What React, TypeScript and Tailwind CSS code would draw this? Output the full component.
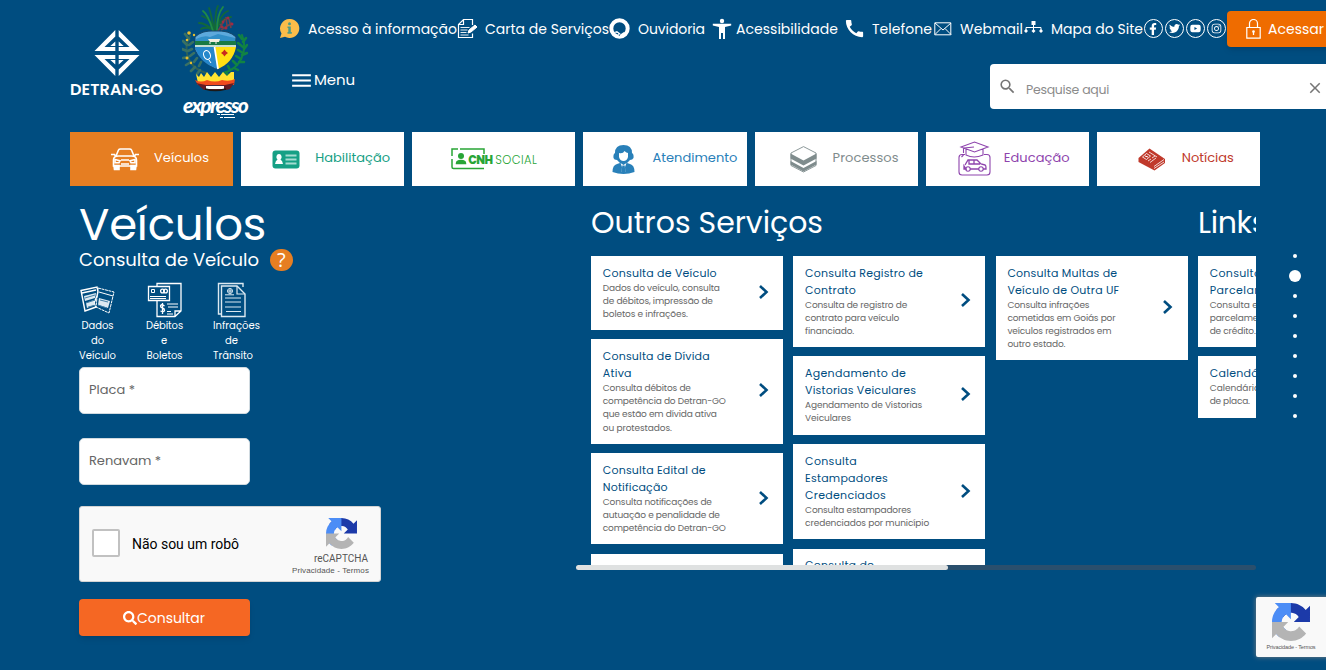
import { useLayoutEffect, useRef, useState, type ReactNode } from "react";
import { FaFacebookF, FaInstagram, FaSearch, FaTwitter, FaYoutube } from "react-icons/fa";
import { MdCall, MdClose, MdMenu, MdSearch } from "react-icons/md";

/** One line of text whose letter spacing is adjusted to fill the given width. */
function Fit({ w, className = "", children }: { w: number; className?: string; children: string }) {
  const ref = useRef<HTMLSpanElement>(null);
  const [spacing, setSpacing] = useState(0);
  useLayoutEffect(() => {
    const el = ref.current;
    if (el) setSpacing((w - el.getBoundingClientRect().width) / children.length);
  }, [w, children]);
  return (
    <span className={`block ${className}`} style={{ width: w }}>
      <span ref={ref} className="inline-block whitespace-nowrap" style={{ letterSpacing: `${spacing}px` }}>
        {children}
      </span>
    </span>
  );
}

function DetranLogo() {
  return (
    <div className="mt-[29px] flex w-[93px] flex-col items-center text-white">
      <svg width="46" height="48" viewBox="0 0 46 48" fill="currentColor">
        <path d="M21.300 1v6.500L10.500 18h10.800v4H0.500zM21.300 12.500V17h-5z" />
        <path d="M24.700 1v6.500L35.500 18H24.700v4h20.800zM24.700 12.500V17h5z" />
        <path d="M21.300 47v-6.500L10.500 30h10.800v-4H0.500zM21.300 35.500V31h-5z" />
        <path d="M24.700 47v-6.500L35.500 30H24.700v-4h20.800zM24.700 35.500V31h5z" />
      </svg>
      <Fit w={93} className="mt-[2px] text-[16px] leading-[21px] font-semibold">DETRAN·GO</Fit>
    </div>
  );
}

function Crest() {
  return (
    <div className="mt-[4px] ml-[19px] w-[66px] text-white">
      <svg width="66" height="90" viewBox="0 0 66 90" fill="none">
        <g stroke="#12683a" strokeWidth="1.800" strokeLinecap="round">
          <path d="M33 28C31 20 27 14 20 12M33 28C30 17 29 9 27 4M33 28C33 17 33 7 36 2M33 28C36 18 40 9 46 7M33 28C26 21 21 19 17 19M33 28C29 23 22 23 19 25M34 26C38 17 43 13 49 13" />
          <path d="M31 27C28 17 24 9 21 7M35 26C35 15 37 8 41 3" stroke="#1f8a45" />
        </g>
        <g stroke="#2d6158" strokeWidth="2" strokeLinecap="round">
          <path d="M8 32C1 45 4 63 24 69" />
          <path d="M7 35l-4-5M5 41l-4-4M5 47l-5-2M6 53l-5 1M9 58l-5 3M13 63l-4 4M18 66l-3 4M7 41l4-3M6 47l4-2M8 52l4-3M12 58l3-4M17 62l2-4" stroke="#397063" strokeWidth="2.600" />
        </g>
        <g stroke="#118343" strokeLinecap="round">
          <path d="M60 31C66 46 59 65 41 69" strokeWidth="2" />
          <path d="M60 35l-3-4M61 38l3-4M61 43l-5-4M62 45l3-4M61 49l-5-3M60 51l5-2M59 55l-5-3M57 58l5 0M55 61l-4-4M52 64l4 2M48 66l-2-4M44 68l2 3" strokeWidth="2.500" />
        </g>
        <g fill="#e7bd2e">
          <circle cx="7" cy="29" r="1.800" /><circle cx="12" cy="31" r="1.200" /><circle cx="5" cy="36" r="1.300" /><circle cx="5" cy="54" r="1.500" /><circle cx="9" cy="59" r="1.200" />
        </g>
        <path d="M36 27l7-12M39 26l11-7M38 20l5 5M44 13l1 9M47 15l2 9" stroke="#6f4149" strokeWidth="1.600" />
        <g fill="#a12b45"><circle cx="41" cy="18" r="1.400" /><circle cx="46" cy="14" r="1.500" /><circle cx="50" cy="20" r="1.500" /><circle cx="44" cy="24" r="1.500" /><circle cx="40" cy="23" r="1.200" /></g>
        <path d="M13 33Q20 26 33 27Q47 26 54 33L53 44Q47 59 34 65Q19 58 13 46z" fill="#5da9dc" stroke="#16476c" />
        <path d="M14 35q8-4 14-2l8-3 17 4v4H14z" fill="#318fc8" />
        <path d="M13 37h41v6H13z" fill="#187a45" /><path d="M26 35h12l-1 3h-9z" fill="#f1eee0" /><path d="M28 38v2m6-2v2" stroke="#eee" />
        <path d="M13 43h20l3 22C23 61 15 52 13 43z" fill="#2587cb" />
        <path d="M33 43h21C52 54 45 61 36 65z" fill="#ffdf12" />
        <path d="M13 42h41M32.500 43l3.500 22" stroke="#fff" strokeWidth="1.700" />
        <ellipse cx="25" cy="51" rx="3.300" ry="4.500" transform="rotate(-20 25 51)" stroke="#fff" strokeWidth="1.100" /><path d="M27 56l2 3" stroke="#fff" />
        <path d="M42.500 45.500l1.500 2 2 1.500-2 1.500-1.500 2-1.500-2-2-1.500 2-1.500z" fill="#c82820" />
        <path d="M14 70l3 3 2-4 3 4 3-5 4 5 4-5 4 5 4-5 4 4 4-4 3 0v8l-2 3H16z" fill="#ffe332" />
        <path d="M13 76q6 3 12 0 8 3 15 0 7 2 13-1l-1 6H16z" fill="#ef4b1e" />
        <path d="M14 79q20 5 38 0l-4 6-4 1H22z" fill="#651c24" />
        <path d="M24 82h18v3H24z" fill="#fff" /><path d="M23 85q10 3 21 0" stroke="#1b1918" strokeWidth="1.500" />
      </svg>
      <div className="relative h-[28px] pl-px">
        <Fit w={64} className="font-['Lato'] text-[21px] leading-[22px] font-black italic">expresso</Fit>
        <svg className="absolute top-[18px] left-[35px]" width="20" height="8" viewBox="0 0 20 8" stroke="currentColor"><path d="M0 2.500h3m1 0h13M3 5.500h3m1 0h11" /></svg>
      </div>
    </div>
  );
}

const navIcons = {
  info: (
    <svg className="-mt-px" width="21" height="21" viewBox="0 0 21 21"><path d="M11 1a9.500 9.500 0 1 1-5 17.700L1 20l1.500-4.500A9.500 9.500 0 0 1 11 1z" fill="#fbbd4a" /><circle cx="10.500" cy="5.800" r="1.500" fill="#4e9b86" /><path d="M8.500 8.500h3.300v5.600h1v1.700H8.500v-1.700h.8v-4h-.8z" fill="#4e9b86" /></svg>
  ),
  letter: (
    <svg className="-mt-px" width="21" height="21" viewBox="0 0 21 21" fill="none" stroke="#fff"><path d="M15.500 7V1.500H6.500L1.500 6.500v13h14v-4M6.500 1.500v5h-5" strokeWidth="1.200" /><path d="M3.500 9.500h9M3.500 12h7M3.500 14.500h6M3.500 17h8" strokeWidth=".9" /><path d="M11 15l1-3 6-5 2 2-6 5z" fill="#fff" /></svg>
  ),
  ear: (
    <svg className="-mt-px" width="21" height="21" viewBox="0 0 21 21"><circle cx="10.500" cy="10.500" r="8.200" fill="none" stroke="#fff" strokeWidth="4" /><path d="M4 14.500l5 .5 1 4 3-1 3-3-1-1-3 2-4-3z" fill="#fff" /><path d="M10 18l1.500-2.500" stroke="#004d80" strokeWidth=".8" /></svg>
  ),
  person: (
    <svg className="-mt-px ml-[7px]" width="20" height="22" viewBox="0 0 20 22" fill="#fff"><circle cx="10" cy="3" r="2.200" /><path d="M.8 5.800h18.400v1.800L13 9v12h-2v-6H9v6H7V9L.8 7.600z" /></svg>
  ),
  phone: <MdCall className="-mt-px ml-[5px] text-[23px]" />,
  mail: (
    <svg className="-mt-px ml-[2px]" width="18" height="14" viewBox="0 0 18 14" fill="none" stroke="#fff"><path d="M.8.800h16v12H.8zM1 1l8 7 8-7M1 12.500l6-6M17 12.500l-6-6" /></svg>
  ),
  map: (
    <svg className="-mt-[5px] ml-[1px]" width="19" height="14" viewBox="0 0 19 14" fill="#fff"><path d="M7.500 1h4v4h-4z" /><path d="M9.500 4v7M2 11V7.500h15V11" fill="none" stroke="#fff" /><path d="M2 9l2 2-2 2-2-2zM9.500 9l2 2-2 2-2-2zM17 9l2 2-2 2-2-2z" /></svg>
  ),
};

const links: { icon: ReactNode; box: string; label: string; w: number }[] = [
  { icon: navIcons.info, box: "w-[29px]", label: "Acesso à informação", w: 149 },
  { icon: navIcons.letter, box: "w-[28px]", label: "Carta de Serviços", w: 124 },
  { icon: navIcons.ear, box: "w-[29px]", label: "Ouvidoria", w: 67 },
  { icon: navIcons.person, box: "w-[31px]", label: "Acessibilidade", w: 102 },
  { icon: navIcons.phone, box: "w-[34px]", label: "Telefone", w: 60 },
  { icon: navIcons.mail, box: "w-[28px]", label: "Webmail", w: 63 },
  { icon: navIcons.map, box: "w-[28px]", label: "Mapa do Site", w: 92 },
];

const socials = [
  { Icon: FaFacebookF, size: "size-[12px]" },
  { Icon: FaTwitter, size: "size-[11px]" },
  { Icon: FaYoutube, size: "size-[11px]" },
  { Icon: FaInstagram, size: "size-[11px]" },
];

function Header() {
  return (
    <header className="flex h-[132px] w-[1400px] pl-[70px]">
      <DetranLogo />
      <Crest />
      <div className="ml-[31px] flex flex-1 flex-col">
        <div className="mt-[11px] flex h-9 items-center text-[14px] text-white">
          {links.map((l) => (
            <a key={l.label} className="flex shrink-0 items-center">
              <span className={`flex shrink-0 items-center ${l.box}`}>{l.icon}</span>
              <Fit w={l.w}>{l.label}</Fit>
            </a>
          ))}
          {socials.map(({ Icon, size }, i) => (
            <a key={i} className="-mt-px flex w-[21px] shrink-0">
              <span className="ml-[0.500px] flex size-[19.500px] items-center justify-center rounded-full border border-white"><Icon className={size} /></span>
            </a>
          ))}
          <button className="flex h-9 w-[113px] shrink-0 items-center rounded-[4px] bg-[#ef6c00] pl-[19px] shadow-md">
            <svg width="15" height="20" viewBox="0 0 15 20" fill="none" stroke="#fff"><path d="M.8 8.500h13.400v10.700H.8zM3.500 8V4.500a4 4 0 0 1 8 0V8" strokeWidth="1.200" /><circle cx="7.500" cy="12.500" r="1.300" fill="#fff" stroke="none" /><path d="M7.500 13v3" strokeWidth="1.300" /></svg>
            <Fit w={56} className="ml-[7px]">Acessar</Fit>
          </button>
        </div>
        <div className="mt-[17px] flex pl-[10px]">
          <button className="flex h-8 items-center text-[15px] text-white"><MdMenu className="size-[25px]" /><Fit w={41}>Menu</Fit></button>
          <div className="ml-[635px] flex h-[45px] w-[360px] shrink-0 items-center rounded-[4px] bg-white text-[#757575]">
            <MdSearch className="ml-[8px] size-[19px]" />
            <Fit w={83} className="mt-[7px] ml-[9px] text-[12.500px] text-[#8b8b8b]">Pesquise aqui</Fit>
            <MdClose className="mt-[2px] ml-[197px] size-[18px]" />
          </div>
        </div>
      </div>
    </header>
  );
}

const CarIcon = (
  <svg width="28" height="24" viewBox="0 0 28 24" fill="none" stroke="#fff" strokeWidth="1.600"><path d="M5 9l2.500-6q.5-1 2-1h9q1.500 0 2 1L23 9M2.500 13q0-4 5-4h13q5 0 5 4v6h-23zM0 7.500h4M24 7.500h4M5 9l-1.500-1M23 9l1.500-1" /><path d="M3 18.500h5v4H3.500zM20 18.500h5l-.5 4H20z" fill="#fff" /><path d="M4 12.500l5 1.200-1 2H4zM24 12.500l-5 1.200 1 2h4zM10 13h8M10 17h8" /></svg>
);
const LicenceIcon = (
  <svg width="28" height="19" viewBox="0 0 28 19"><rect x=".5" y=".5" width="27" height="18" rx="3" fill="#16a085" /><path d="M7 4a2.500 3 0 0 1 1.500 5.500q2 1 2.500 4.500H3q.5-3.500 2.500-4.500A2.500 3 0 0 1 7 4z" fill="#fff" /><path d="M13.500 5.500h11M13.500 9.500h11M13.500 13.500h11" stroke="#a5dcd1" strokeWidth="1.800" /></svg>
);
const CnhIcon = (
  <div className="flex h-[22px] items-center text-[#28a536]">
    <svg width="35" height="22" viewBox="0 0 35 22" fill="none" stroke="currentColor" strokeWidth="1.500"><path d="M1 8V1h6M9 1h24v6M1 11v8q0 1.500 1.500 1.500H33" /><circle cx="10" cy="8" r="3" fill="currentColor" stroke="none" /><path d="M5.500 15.500c0-4 9-4 9 0z" fill="currentColor" /></svg>
    <Fit w={24} className="-ml-[18px] mt-[2px] bg-white text-[11.500px] leading-[13px] font-extrabold">CNH</Fit>
    <Fit w={42} className="mt-[2px] ml-[3px] text-[11.500px] leading-[13px] font-light">SOCIAL</Fit>
  </div>
);
const AgentIcon = (
  <svg width="23" height="29" viewBox="0 0 23 29" fill="#2980b9"><path d="M3 8q0-8 8.500-8T20 8q2 1 1.500 5-1 2-3.500 2l-3 3h-7l-3-3q-3 0-3.500-2-.5-4 1.500-5z" /><path d="M.5 27q0-7 4.500-8l3-1h7l3 1q4.500 1 4.500 8-11 4-22 0z" /><path d="M7 8q4 1 5.500-2 2 2 3.500 2v4q-1 4-4.500 4T7 12zM8.500 18l3 2 3-2-1.500 4 .3 5h-3.600l.3-5z" fill="#fff" /><path d="M10.300 20.500h2.400l.8 7.500h-4z" /></svg>
);
const StackIcon = (
  <svg width="27" height="27" viewBox="0 0 27 27" fill="#7f8c8d"><path d="M13.500.6L26 7v12.500L13.500 26 1 19.500V7z" fill="#fff" stroke="#7f8c8d" strokeWidth=".9" /><path d="M.5 7.500l13 7 13-7v5l-13 7-13-7zM.5 15l13 7 13-7v3.500l-13 7-13-7z" /></svg>
);
const SchoolIcon = (
  <svg width="33" height="36" viewBox="0 0 33 36" fill="none" stroke="#8e44ad" strokeWidth="1.100"><path d="M3 6l13.500-5L30 6l-13.500 5zM8 8v6q8 4 17 0V8M5.500 7v5M5.500 14l-2 2M16 6l-10 1" /><path d="M7 13.500H4q-3 0-3 3V31q0 3 3 3h25q3 0 3-3V16.500q0-3-3-3h-3" /><path d="M7 24l3-5h9l4 4 4 1q1 0 1 4h-3m-4 0h-9m-4 0H6v-3zM11 19v4h11M16 19v4" strokeWidth="1.300" /><circle cx="10" cy="28" r="2.200" /><circle cx="23" cy="28" r="2.200" /></svg>
);
const NewsIcon = (
  <svg width="28" height="23" viewBox="0 0 28 23" fill="#c0392b"><path d="M.5 10L11.500.5 27 11v4L16.500 22.500.5 14z" /><path d="M4.500 9l4-3.500 4 2.500-4 3.500zM11 4l8 5M14 10l3-2M10 13l3-2M12 14.500l6-4.500M16 18.500l10-7M16 20.500l10-6.500" fill="none" stroke="#fff" strokeWidth=".8" /><path d="M7 8l3 1" stroke="#fff" /></svg>
);

const tabs: { label: string; w: number; icon: ReactNode; pad: string; gap: string; color: string }[] = [
  { label: "Veículos", w: 55, icon: CarIcon, pad: "pl-[41px]", gap: "ml-[15px]", color: "bg-[#e67e22] text-white" },
  { label: "Habilitação", w: 75, icon: LicenceIcon, pad: "pl-[31px]", gap: "ml-[15px]", color: "bg-white text-[#16a085]" },
  { label: "", w: 0, icon: CnhIcon, pad: "pl-[39px]", gap: "", color: "bg-white" },
  { label: "Atendimento", w: 85, icon: AgentIcon, pad: "pl-[29px]", gap: "ml-[17px]", color: "bg-white text-[#2980b9]" },
  { label: "Processos", w: 66, icon: StackIcon, pad: "pl-[35px]", gap: "ml-[16px]", color: "bg-white text-[#7f8c8d]" },
  { label: "Educação", w: 66, icon: SchoolIcon, pad: "pl-[32px]", gap: "ml-[13px]", color: "bg-white text-[#8e44ad]" },
  { label: "Notícias", w: 52, icon: NewsIcon, pad: "pl-[41px]", gap: "ml-[16px]", color: "bg-white text-[#c0392b]" },
];

function Tabs() {
  return (
    <nav className="ml-[70px] grid h-[54px] w-[1190px] grid-cols-7 gap-2 text-[13px]">
      {tabs.map((t, i) => (
        <a key={i} className={`flex items-center ${t.pad} ${t.color}`}>
          {t.icon}
          {t.label && <Fit w={t.w} className={`-mt-[2px] ${t.gap}`}>{t.label}</Fit>}
        </a>
      ))}
    </nav>
  );
}

function RecaptchaLogo({ className }: { className: string }) {
  return (
    <svg className={className} viewBox="0 0 64 64">
      <path fill="#1c3aa9" d="M64 31.955l-.033-1.370V4.687l-7.160 7.160C50.948 4.674 42.033.093 32.050.093c-10.400 0-19.622 4.960-25.458 12.640l11.736 11.860a15.550 15.550 0 0 1 4.754-5.334c2.050-1.600 4.952-2.906 8.968-2.906.485 0 .860.057 1.135.163 4.976.393 9.288 3.140 11.828 7.124l-8.307 8.307L64 31.953" />
      <path fill="#4c8df6" d="M31.862.094l-1.370.033H4.594l7.160 7.160C4.580 13.147 0 22.060 0 32.046c0 10.400 4.960 19.622 12.640 25.458L24.500 45.768a15.550 15.550 0 0 1-5.334-4.754c-1.600-2.050-2.906-4.952-2.906-8.968 0-.485.057-.860.163-1.135.393-4.976 3.140-9.288 7.124-11.828l8.307 8.307L31.860.095" />
      <path fill="#b4b4b4" d="M.001 32.045l.033 1.370v25.898l7.160-7.160c5.860 7.173 14.774 11.754 24.760 11.754 10.400 0 19.622-4.960 25.458-12.640l-11.736-11.860a15.550 15.550 0 0 1-4.754 5.334c-2.050 1.600-4.952 2.906-8.968 2.906-.485 0-.860-.057-1.135-.163-4.976-.393-9.288-3.140-11.828-7.124l8.307-8.307c-10.522.040-22.400.066-27.295-.005" />
    </svg>
  );
}

const stepIcons: { box: string; icon: ReactNode; lines: [string, number][] }[] = [
  {
    box: "w-[37px]",
    lines: [["Dados", 32], ["do", 13], ["Veículo", 37]],
    icon: <svg className="ml-px" width="36" height="36" viewBox="0 0 36 36" fill="none" stroke="#fff"><path d="M1 8.500l16-3.500 1 5-1 4-3 7 2 4-11 4zM2 11l14-3" strokeWidth="1.400" /><path d="M18 6l16 4-5 21-13-6z" strokeDasharray="3 .6" /><path d="M19 10l14 4" /><path d="M4 14l12-3-1 5-10 3zM6 21l8-3v5l-7 3zM19 16l11 3-2 7-10-3z" fill="#dce9f1" stroke="none" /><path d="M5 16l10-3M6 21l9-3M8 25l8-2M20 18l8 2M18 23l9 3" stroke="#4380a7" /></svg>,
  },
  {
    box: "w-[37px]",
    lines: [["Débitos", 37], ["e", 7], ["Boletos", 36]],
    icon: <svg className="ml-px" width="36" height="36" viewBox="0 0 36 36" fill="none" stroke="#fff" strokeWidth="1.300"><path d="M10 4V1.500h24V29l-6 5.500H10V19M28 34v-5h6" /><path d="M1.500 4.500h21v14h-21z" /><path d="M4.500 7.500h3v3h-3zM3 14.500h16M3 16.500h16" strokeWidth="1" /><circle cx="15.500" cy="9" r="1.900" /><circle cx="18.500" cy="9" r="1.900" /><path d="M20 22h11M21 25h10M20 29.500h4M20 32h6" strokeWidth="1.100" /><path d="M17.500 24q-3.500-2.500-4 0 0 1.500 2 2t2 2.500q-.5 2-4 .5M15.500 21v11" strokeWidth="1.300" /></svg>,
  },
  {
    box: "w-[47px]",
    lines: [["Infrações", 47], ["de", 13], ["Trânsito", 40]],
    icon: <svg className="-ml-[10px]" width="30" height="36" viewBox="0 0 30 36" fill="none" stroke="#dce9f1" strokeWidth="1.400"><path d="M5 32H1.500V1.500H26V5M4.500 34.500V4H20l8 8v22.500z" /><path d="M20 4v8h8M8 16h16M8 20h16M8 25h16M9 29.500h15" strokeWidth="1.200" /><circle cx="13" cy="9" r="2.500" strokeWidth="1" /><path d="M10.500 9h5M13 6.500v5M8 12.800h9" strokeWidth="1" /></svg>,
  },
];

function SearchForm() {
  return (
    <section className="flex w-[497px] shrink-0 flex-col pl-[9px] text-white">
      <Fit w={187} className="mt-[12px] text-[45px] leading-[54px]">Veículos</Fit>
      <div className="-mt-[4px] flex h-6 items-center">
        <Fit w={180} className="-mt-[2px] text-[18px]">Consulta de Veículo</Fit>
        <span className="ml-[11px] flex size-[22.500px] items-center justify-center rounded-full bg-[#e67e22] font-['Open_Sans'] text-[20px] leading-none">?</span>
      </div>
      <div className="mt-[10px] flex gap-[30px] text-[10px] leading-[15px]">
        {stepIcons.map((s) => (
          <div key={s.lines[0][0]} className={`flex flex-col items-center ${s.box}`}>
            {s.icon}
            {s.lines.map(([text, w]) => <Fit key={text} w={w} className={text === "Trânsito" ? "self-start" : text === "de" ? "mr-[10px]" : ""}>{text}</Fit>)}
          </div>
        ))}
      </div>
      <div className="mt-[4px] flex h-[47px] w-[171px] items-center rounded-[5px] border border-[#d0dae0] bg-white pb-[2px] pl-[9px] text-[13px] text-[#666]"><Fit w={46}>Placa *</Fit></div>
      <div className="mt-[24px] flex h-[47px] w-[171px] items-center rounded-[5px] border border-[#d0dae0] bg-white pb-[2px] pl-[9px] text-[13px] text-[#666]"><Fit w={72}>Renavam *</Fit></div>
      <div className="mt-[21px] flex h-[76px] w-[302px] items-center rounded-[3px] border border-[#d3d3d3] bg-[#f9f9f9] font-['Roboto'] text-black">
        <span className="-mt-[2px] ml-[12px] size-7 rounded-[2px] border-2 border-[#c1c1c1] bg-white" />
        <Fit w={107} className="ml-[12px] text-[14px]">Não sou um robô</Fit>
        <div className="ml-[53px] flex w-[77px] flex-col items-center text-[#555]">
          <RecaptchaLogo className="mt-[5px] ml-[21px] size-[31px]" />
          <Fit w={54} className="mt-[3px] ml-[21px] text-[10px] leading-[14px]">reCAPTCHA</Fit>
          <Fit w={77} className="font-['Liberation_Sans'] text-[8px] leading-[10px]">Privacidade - Termos</Fit>
        </div>
      </div>
      <button className="mt-[17px] flex h-[37px] w-[171px] items-center justify-center rounded-[4px] bg-[#f56723] pt-px pr-px text-[14px] shadow-md"><FaSearch className="size-[14px]" /><Fit w={68}>Consultar</Fit></button>
    </section>
  );
}

type Line = [string, number];
type Service = { title: Line[]; text: Line[] };

const columns: Service[][] = [
  [
    { title: [["Consulta de Veículo", 114]], text: [["Dados do veículo, consulta", 117], ["de débitos, impressão de", 110], ["boletos e infrações.", 85]] },
    { title: [["Consulta de Dívida", 107], ["Ativa", 29]], text: [["Consulta débitos de", 88], ["competência do Detran-GO", 123], ["que estão em dívida ativa", 114], ["ou protestados.", 69]] },
    { title: [["Consulta Edital de", 103], ["Notificação", 65]], text: [["Consulta notificações de", 109], ["autuação e penalidade de", 117], ["competência do Detran-GO", 123]] },
    { title: [], text: [] },
  ],
  [
    { title: [["Consulta Registro de", 118], ["Contrato", 51]], text: [["Consulta de registro de", 102], ["contrato para veículo", 94], ["financiado.", 49]] },
    { title: [["Agendamento de", 101], ["Vistorias Veiculares", 111]], text: [["Agendamento de Vistorias", 117], ["Veiculares", 46]] },
    { title: [["Consulta", 52], ["Estampadores", 83], ["Credenciados", 81]], text: [["Consulta estampadores", 106], ["credenciados por município", 124]] },
    { title: [["Consulta de", 69]], text: [] },
  ],
  [{ title: [["Consulta Multas de", 110], ["Veículo de Outra UF", 112]], text: [["Consulta infrações", 82], ["cometidas em Goiás por", 108], ["veículos registrados em", 104], ["outro estado.", 58]] }],
  [
    { title: [["Consulta", 52], ["Parcelamento", 83]], text: [["Consulta e", 48], ["parcelamento", 63], ["de crédito.", 46]] },
    { title: [["Calendário", 64]], text: [["Calendário", 50], ["de placa.", 40]] },
  ],
];

function ServiceCard({ title, text }: Service) {
  return (
    <a className="flex w-[192px] shrink-0 items-center bg-white px-[11.800px] py-[8.700px]">
      <div className="w-[140px]">
        <div className="text-[11px] leading-[17px] text-[#004d80]">
          {title.map(([line, w]) => <Fit key={line} w={w}>{line}</Fit>)}
        </div>
        <div className={`text-[9px] leading-[13.200px] text-[#666] ${text.length ? "min-h-[26.800px]" : "min-h-[60px]"}`}>
          {text.map(([line, w]) => <Fit key={line} w={w}>{line}</Fit>)}
        </div>
      </div>
      <svg className="-mt-[2px] ml-[15px]" width="11" height="16" viewBox="0 0 11 16" fill="none" stroke="#004d80" strokeWidth="2.600"><path d="M2 2l6.500 6L2 14" /></svg>
    </a>
  );
}

function Services() {
  return (
    <section className="w-[680px] shrink-0">
      <div className="h-[379px] overflow-hidden pl-[15px]">
        <div className="flex h-[69.900px] pt-[15px] text-[30px] leading-[44px] text-white">
          <div className="w-[607px] shrink-0"><Fit w={232}>Outros Serviços</Fit></div>
          <Fit w={69} className="shrink-0">Links</Fit>
        </div>
        <div className="flex gap-[10.300px]">
          {columns.map((cards, i) => (
            <div key={i} className="flex shrink-0 flex-col gap-[9.500px]">
              {cards.map((card, j) => <ServiceCard key={j} {...card} />)}
            </div>
          ))}
        </div>
      </div>
      <div className="h-[5px] rounded-full bg-[#2a4f6d]"><div className="h-full w-[372px] rounded-full bg-[#dfe1e1]" /></div>
    </section>
  );
}

export default function App() {
  return (
    <div className="relative h-[670px] w-[1326px] overflow-hidden bg-[#004d80] font-['Poppins','Inter',sans-serif]">
      <Header />
      <Tabs />
      <main className="flex pl-[70px]">
        <SearchForm />
        <div className="ml-[9px] flex">
          <Services />
        </div>
        <div className="mt-[60px] ml-[33px] flex w-3 flex-col items-center">
          {Array.from({ length: 9 }, (_, i) => (
            <span key={i} className="flex h-5 items-center justify-center"><i className={i === 1 ? "size-3 rounded-full bg-white" : "size-1 rounded-full bg-white"} /></span>
          ))}
        </div>
      </main>
      <div className="absolute top-[597px] left-[1256px] flex h-[60px] w-[256px] rounded-[2px] bg-[#f9f9f9] shadow-[0_0_5px_gray]">
        <div className="flex w-[70px] flex-col items-center text-[#555]">
          <RecaptchaLogo className="mt-[6px] size-[38px]" />
          <Fit w={49} className="mt-[2px] font-['Liberation_Sans'] text-[5.500px] leading-[8px]">Privacidade - Termos</Fit>
        </div>
      </div>
    </div>
  );
}
